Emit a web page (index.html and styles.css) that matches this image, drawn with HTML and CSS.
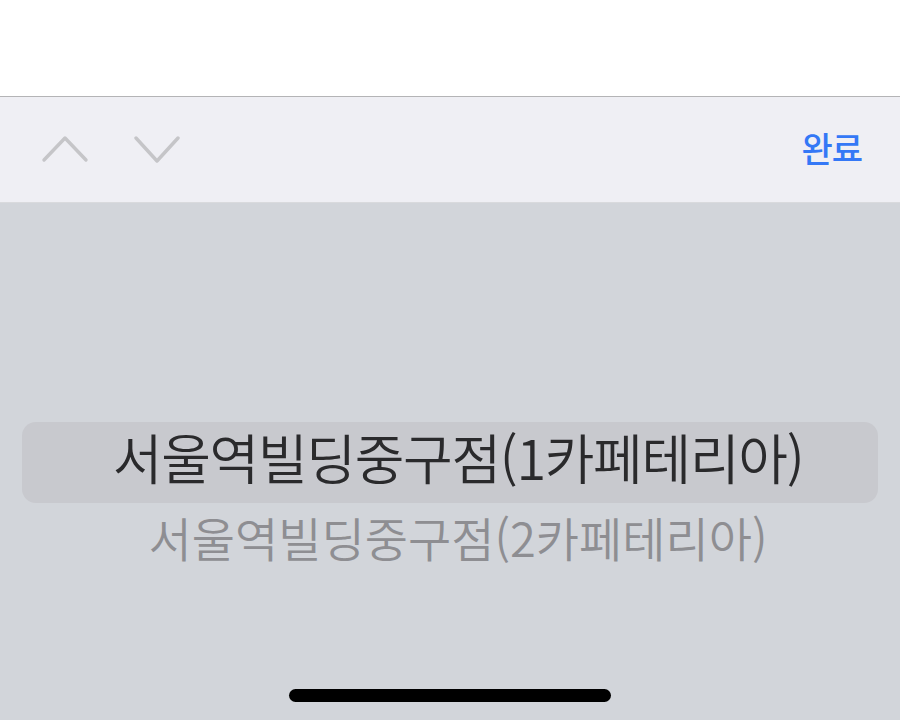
FILE: index.html
```html
<!DOCTYPE html>
<html lang="ko">
<head>
<meta charset="utf-8">
<link rel="stylesheet" href="styles.css">
</head>
<body>
<div class="screen">
  <div class="top"></div>
  <div class="toolbar">
    <div class="nav">
      <svg class="chev" width="48" height="28" viewBox="0 0 48 28"><polyline points="3,25 24,3 45,25" fill="none" stroke="#c5c5c8" stroke-width="3.4" stroke-linecap="round" stroke-linejoin="round"/></svg>
      <svg class="chev" width="48" height="28" viewBox="0 0 48 28"><polyline points="3,3 24,26 45,3" fill="none" stroke="#c5c5c8" stroke-width="3.4" stroke-linecap="round" stroke-linejoin="round"/></svg>
    </div>
    <div class="done">완료</div>
  </div>
  <div class="picker">
    <div class="row selected">서울역빌딩중구점(1카페테리아)</div>
    <div class="row next">서울역빌딩중구점(2카페테리아)</div>
    <div class="home"></div>
  </div>
</div>
</body>
</html>
```
FILE: styles.css
```css
html, body {
  margin: 0;
  padding: 0;
}
body {
  font-family: "Noto Sans CJK KR", "Noto Sans", sans-serif;
  background: #d2d5da;
}
.screen {
  width: 900px;
  height: 720px;
  display: flex;
  flex-direction: column;
  overflow: hidden;
}
.top {
  height: 96px;
  background: #ffffff;
  border-bottom: 1px solid #b4b4b6;
}
.toolbar {
  height: 105px;
  background: #efeff4;
  display: flex;
  align-items: center;
  justify-content: space-between;
  padding: 0 38px 0 41px;
  border-bottom: 1px solid #d9dadd;
}
.nav {
  display: flex;
  gap: 44px;
  margin-top: -2px;
}
.chev {
  display: block;
}
.done {
  color: #3478f6;
  font-size: 34px;
  font-weight: 500;
  letter-spacing: -1px;
  margin-top: -4px;
}
.picker {
  flex: 1;
  display: flex;
  flex-direction: column;
  padding-top: 219px;
  background: #d2d5da;
}
.row {
  display: flex;
  align-items: center;
  justify-content: center;
  white-space: nowrap;
  box-sizing: border-box;
}
.selected {
  height: 81px;
  margin: 0 22px;
  padding: 0 0 12px 16px;
  background: #c8c9ce;
  border-radius: 14px;
  color: #2a2a2c;
  font-size: 54px;
  font-weight: 350;
  letter-spacing: -1.3px;
}
.next {
  height: 76px;
  padding: 0 0 10px 16px;
  color: #8e8e92;
  font-size: 47px;
  font-weight: 350;
  letter-spacing: 0;
}
.home {
  margin: auto auto 18px;
  width: 322px;
  height: 13px;
  border-radius: 7px;
  background: #000000;
}
```
